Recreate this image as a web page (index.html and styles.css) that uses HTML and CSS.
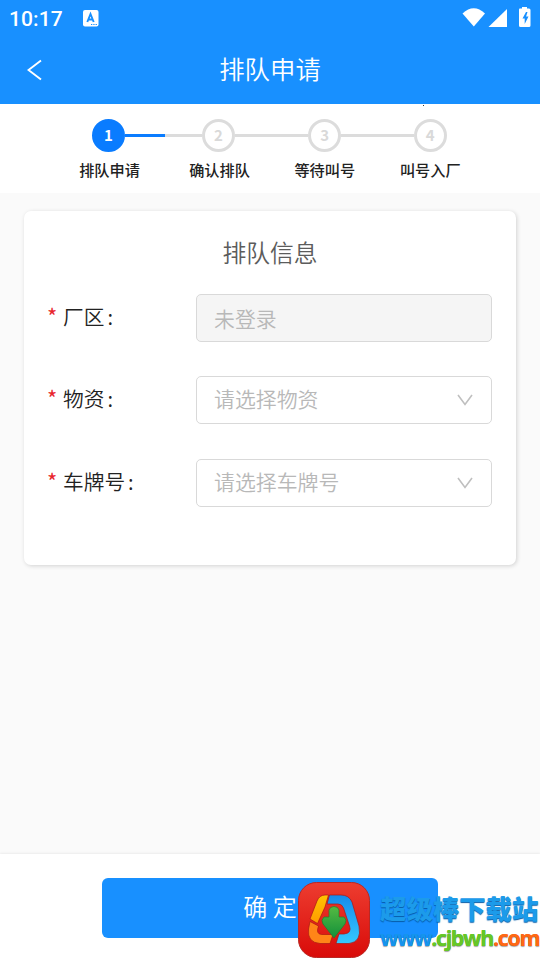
FILE: index.html
```html
<!DOCTYPE html>
<html lang="zh-CN">
<head>
<meta charset="utf-8">
<title>排队申请</title>
<link rel="stylesheet" href="styles.css">
</head>
<body>
<div class="app">
  <header class="header">
    <div class="status">
      <span class="time">10:17</span>
      <svg class="status-app" width="16" height="17" viewBox="0 0 16 17"><rect width="15.500" height="16.500" rx="2" fill="#fff"/><path d="M4.300 12 7.500 4 10.700 12M5.500 9.500H9.500" fill="none" stroke="#1890ff" stroke-width="1.900"/><path d="M8 14.500h1.300M10.300 14.500h1.300M12.600 14.500h1.300" stroke="#1890ff" stroke-width="1.200"/></svg>
      <svg class="status-icons" width="70" height="22" viewBox="0 0 70 22"><path d="M.5 7.500Q11.800-3 23 7.500L11.800 20.500Z" fill="#fff"/><path d="M26.500 21 45 3v18Z" fill="#fff"/><path d="M57.500 2.500H60V1h5V2.500h2q1.500 0 1.500 1.500V19.500q0 1.500-1.500 1.500h-8.500q-1.500 0-1.500-1.500V4Q57 2.500 57.500 2.500Z" fill="#fff"/><path d="M64 6 60.500 12.500h2.200V18l3.800-7.500h-2.400L65.500 6Z" fill="#1890ff"/></svg>
    </div>
    <div class="titlebar">
      <svg class="back" width="16" height="22" viewBox="0 0 16 22"><path d="M14 1.500 1.500 11 14 20.500" fill="none" stroke="#fff" stroke-width="1.900"/></svg>
      <h1 class="title">排队申请</h1>
    </div>
  </header>
  <nav class="steps">
    <i class="speck"></i>
    <div class="step active">
      <div class="track"><i class="line"></i><b class="dot">1</b><i class="line"></i></div>
      <span class="step-label">排队申请</span>
    </div>
    <div class="step second">
      <div class="track"><i class="line"></i><b class="dot">2</b><i class="line"></i></div>
      <span class="step-label">确认排队</span>
    </div>
    <div class="step">
      <div class="track"><i class="line"></i><b class="dot">3</b><i class="line"></i></div>
      <span class="step-label">等待叫号</span>
    </div>
    <div class="step last">
      <div class="track"><i class="line"></i><b class="dot">4</b><i class="line"></i></div>
      <span class="step-label">叫号入厂</span>
    </div>
  </nav>
  <main class="content">
    <section class="card">
      <h2 class="card-title">排队信息</h2>
      <div class="row">
        <div class="label"><span class="star">*</span>厂区<span class="colon">:</span></div>
        <div class="field disabled"><span>未登录</span></div>
      </div>
      <div class="row">
        <div class="label"><span class="star">*</span>物资<span class="colon">:</span></div>
        <div class="field"><span>请选择物资</span><svg width="18" height="14" viewBox="0 0 18 14"><path d="M2 2 9 11.500 16 2" fill="none" stroke="#bfbfbf" stroke-width="1.600"/></svg></div>
      </div>
      <div class="row">
        <div class="label"><span class="star">*</span>车牌号<span class="colon">:</span></div>
        <div class="field"><span>请选择车牌号</span><svg width="18" height="14" viewBox="0 0 18 14"><path d="M2 2 9 11.500 16 2" fill="none" stroke="#bfbfbf" stroke-width="1.600"/></svg></div>
      </div>
    </section>
  </main>
  <footer class="footer">
    <div class="submit">确 定</div>
    <div class="brand">
      <svg class="brand-logo" width="72" height="76" viewBox="0 0 72 76">
        <defs>
          <linearGradient id="red" x2="0" y2="1"><stop stop-color="#ed3d30"/><stop offset="1" stop-color="#d90b09"/></linearGradient>
          <linearGradient id="gold" x2="0" y2="1"><stop stop-color="#ffc400"/><stop offset="1" stop-color="#ff9a00"/></linearGradient>
          <linearGradient id="blue" x2="0" y2="1"><stop stop-color="#168bec"/><stop offset="1" stop-color="#35c9ff"/></linearGradient>
          <linearGradient id="green" x2="0" y2="1"><stop stop-color="#55ba42"/><stop offset="1" stop-color="#12903b"/></linearGradient>
        </defs>
        <rect x=".5" y=".5" width="71" height="75" rx="18" fill="url(#red)" stroke="#b92824"/>
        <path d="M27 13H30.500L27 25 19.500 41.500 12 37 19 19Q21.500 13 27 13Z" fill="url(#gold)" stroke="#a91712" stroke-width=".7"/>
        <path d="M12 39.500 20.500 44Q17.500 52 23.500 52.500H35L32 61.500H22Q9 60.500 10.500 47Z" fill="#ff8518" stroke="#a91712" stroke-width=".7"/>
        <path d="M31.500 13H43Q51 13 54 20L61 44Q64 60 51 61.500H38L41 52H46Q54 51 51.500 44L45.500 26Q44 22 40 22H29Z" fill="url(#blue)" stroke="#a91712" stroke-width=".7"/>
        <path d="M31 35V28Q32 24.500 36 24.500Q40 24.500 41 28V35H46Q49.500 38 47 42L36 56 25 42Q22.500 38 26 35Z" fill="url(#green)" stroke="#257b2b" stroke-width=".7"/>
      </svg>
      <div class="brand-copy">
        <div class="brand-name">超级棒下载站</div>
        <div class="brand-url">www<span class="url-green">.cjbwh</span><span class="url-orange">.com</span></div>
      </div>
    </div>
  </footer>
</div>
</body>
</html>
```
FILE: styles.css
```css
* { box-sizing: border-box; }
body { margin: 0; font-family: "Noto Sans CJK SC", sans-serif; }
.app { width: 540px; height: 960px; display: flex; flex-direction: column; background: #fafafa; overflow: hidden; }
.header { height: 104px; background: #1890ff; color: #fff; flex: none; }
.status { height: 36px; display: flex; align-items: flex-start; padding: 6px 9px 0 9px; }
.time { width: 74px; font: 500 21px/26px Roboto, sans-serif; letter-spacing: .1px; }
.status-app { margin-top: 4px; }
.status-icons { margin-left: auto; margin-right: -1px; }
.titlebar { height: 68px; display: flex; align-items: center; padding-left: 27px; }
.back { flex: none; }
.title { margin: 0 43px 4px 0; flex: 1; text-align: center; font-weight: 350; font-size: 25.4px; line-height: 36px; }
.steps { position: relative; height: 89px; flex: none; background: #fff; display: flex; padding: 15px 0 0 56px; }
.speck { position: absolute; left: 423px; top: 1px; width: 1px; height: 1px; background: #333; }
.step { width: 105.5px; display: flex; flex-direction: column; align-items: center; }
.step.active { width: 109px; }
.step.second { width: 107px; }
.track { display: flex; align-items: center; width: 100%; }
.line { flex: 1; height: 3px; background: #dcdcdc; }
.active .line:first-child { flex: 0 0 36px; background: transparent; }
.active .line:last-child { background: #0a7cff; }
.last .line:last-child { background: transparent; }
.dot { width: 33px; height: 33px; flex: none; border: 3px solid #dcdcdc; border-radius: 50%; text-align: center; font: 700 15px/26px "Noto Sans CJK SC", sans-serif; color: #d9d9d9; }
.active .dot { background: #0a7cff; border-color: #0a7cff; color: #fff; }
.step-label { margin-top: 6px; font-weight: 500; font-size: 15.2px; line-height: 22px; color: #222; white-space: nowrap; }
.active .step-label { margin-right: 2px; }
.second .step-label { margin-left: 2px; }
.content { flex: 1; padding: 18px 24px; }
.card { height: 354px; width: 492px; background: #fff; border-radius: 7px; box-shadow: 1px 1px 4px rgba(0, 0, 0, .16); padding: 23px 24px 0; }
.card-title { margin: 0 0 25px; text-align: center; font-weight: 350; font-size: 23.8px; line-height: 35px; color: #5c5c5c; }
.row { display: flex; height: 48px; margin-bottom: 34px; }
.row:last-child { margin-top: 35px; }
.label { width: 148px; font-size: 20.7px; line-height: 44px; font-weight: 350; color: #222; }
.star { display: inline-block; width: 15px; color: #e8262d; font: 22px/20px "Noto Sans CJK SC", sans-serif; text-indent: -1px; }
.colon { margin-left: 3px; }
.field { flex: 1; display: flex; align-items: center; justify-content: space-between; border: 1px solid #d9d9d9; border-radius: 5px; padding: 0 17px 5px 17px; font-size: 20.9px; font-weight: 350; line-height: 40px; color: #b8b8b8; }
.field svg { margin-top: 5px; }
.disabled { background: #f5f5f5; padding-bottom: 1px; }
.footer { position: relative; height: 106px; flex: none; background: #fff; box-shadow: 0 -1px 2px rgba(0, 0, 0, .06); padding: 24px 102px 0; }
.submit { height: 60px; border-radius: 6px; background: #1890ff; color: #fff; text-align: center; font-size: 24px; font-weight: 350; line-height: 56px; }
.brand { position: absolute; left: 298px; top: 28px; display: flex; }
.brand-copy { margin-left: 10px; white-space: nowrap; font-weight: 900; }
.brand-name { margin-top: 7px; font-size: 26.4px; line-height: 38px; height: 38px; color: #1c9bea; text-shadow: 0 1px 1px #075da8; }
.brand-url { margin-top: -1px; font: 700 21.5px/24px "Open Sans", sans-serif; letter-spacing: -1.35px; color: #1594ee; text-shadow: 0 1px 1px rgba(0, 0, 0, .35), 0 0 .5px currentColor; }
.url-green { color: #65c827; }
.url-orange { color: #ff6815; }
```
